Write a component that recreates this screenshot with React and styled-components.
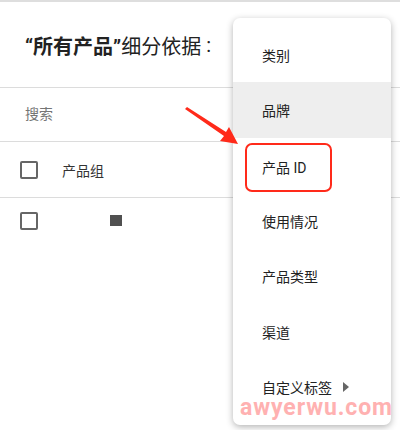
import React from "react";
import styled, { createGlobalStyle } from "styled-components";

const GlobalStyle = createGlobalStyle`
  html, body {
    margin: 0;
    padding: 0;
    background: #ffffff;
  }
  body {
    font-family: "Roboto", "Noto Sans CJK SC", sans-serif;
    color: #212121;
  }
`;

const Page = styled.div`
  position: relative;
  width: 400px;
  height: 430px;
  overflow: hidden;
  background: #fff;
  border-top: 2px solid #dedede;
  box-sizing: border-box;
  padding-top: 1px;
`;

const TitleRow = styled.div`
  display: flex;
  align-items: center;
  height: 84px;
  padding-left: 25px;
  border-bottom: 1px solid #dcdcdc;
  font-size: 20px;
  color: #222;

  b {
    font-weight: 700;
  }
`;

const Colon = styled.span`
  margin-left: 5px;
`;

const SearchRow = styled.div`
  display: flex;
  align-items: center;
  height: 54px;
  padding-left: 25px;
  padding-bottom: 3px;
  box-sizing: border-box;
  border-bottom: 1px solid #dcdcdc;
  font-size: 14px;
  color: #757575;
`;

const TableRow = styled.div`
  display: flex;
  align-items: center;
  height: ${(p) => (p.$tall ? 55 : 54)}px;
  padding-left: 20px;
  border-bottom: ${(p) => (p.$line ? "1px solid #dcdcdc" : "none")};
  font-size: 14px;
  color: #333;
`;

const Checkbox = styled.span`
  display: inline-block;
  width: 14px;
  height: 14px;
  border: 2px solid #666;
  border-radius: 2px;
  margin-right: ${(p) => p.$gap}px;
  margin-top: ${(p) => p.$offset || 0}px;
`;

const Square = styled.span`
  display: inline-block;
  width: 12px;
  height: 11px;
  background: #505050;
  margin-top: -10px;
`;

const Menu = styled.div`
  position: absolute;
  left: 233px;
  top: 16px;
  width: 158px;
  padding: 9px 0 10px;
  background: #fff;
  border-radius: 7px;
  box-shadow: 0 2px 7px rgba(0, 0, 0, 0.3);
`;

const MenuItem = styled.div`
  display: flex;
  align-items: center;
  height: 55.4px;
  padding-left: 29px;
  font-size: 14px;
  color: #222;
  background: ${(p) => (p.$active ? "#eeeeee" : "transparent")};
`;

const Highlight = styled.span`
  display: inline-flex;
  align-items: center;
  margin-left: -17px;
  padding: 0 0 0 15px;
  width: 68px;
  height: 45px;
  border: 2.5px solid #ff2a1a;
  border-radius: 7px;
  margin-top: 4px;
`;

const Caret = styled.span`
  display: inline-block;
  margin-left: 11px;
  width: 0;
  height: 0;
  border-top: 5px solid transparent;
  border-bottom: 5px solid transparent;
  border-left: 6px solid #666;
`;

const Watermark = styled.div`
  position: absolute;
  left: 240px;
  top: 392px;
  font-family: "Roboto", sans-serif;
  font-weight: 700;
  font-size: 23px;
  letter-spacing: 0.9px;
  color: #ffa9a9;
  opacity: 0.9;
  pointer-events: none;
`;

const Arrow = styled.svg`
  position: absolute;
  left: 180px;
  top: 100px;
  width: 64px;
  height: 48px;
`;

const items = ["类别", "品牌", "产品 ID", "使用情况", "产品类型", "渠道", "自定义标签"];

const App = () => {
  return (
    <Page>
      <GlobalStyle />
      <TitleRow>
        <span>
          <b>“所有产品”</b>细分依据
        </span>
        <Colon>:</Colon>
      </TitleRow>
      <SearchRow>搜索</SearchRow>
      <TableRow $tall $line>
        <Checkbox $gap={24} />
        产品组
      </TableRow>
      <TableRow>
        <Checkbox $gap={72} $offset={-8} />
        <Square />
      </TableRow>

      <Menu>
        {items.map((item, i) => {
          if (item === "产品 ID") {
            return (
              <MenuItem key={item}>
                <Highlight>{item}</Highlight>
              </MenuItem>
            );
          }
          return (
            <MenuItem key={item} $active={i === 1}>
              {item}
              {i === items.length - 1 && <Caret />}
            </MenuItem>
          );
        })}
      </Menu>

      <Arrow viewBox="0 0 64 48">
        <polygon points="5,7 7,5 46,30 49,25 58,42 40,39 44,34" fill="#ff2a1a" />
      </Arrow>

      <Watermark>awyerwu.com</Watermark>
    </Page>
  );
};

export default App;
